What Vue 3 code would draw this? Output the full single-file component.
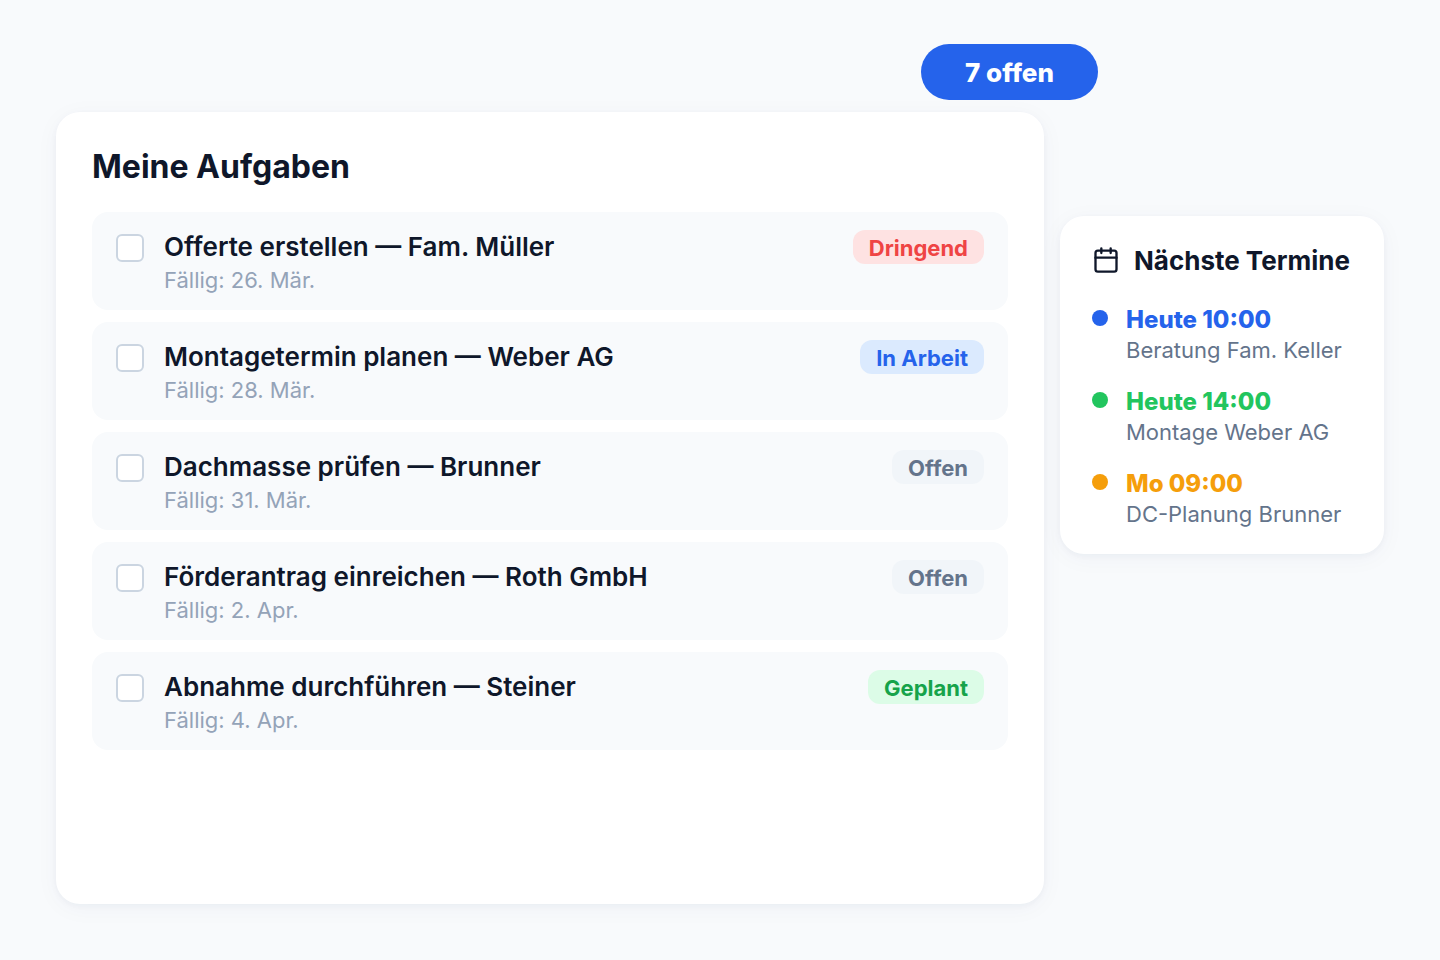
<script setup>
const tasks = [
  { id: 1, title: 'Offerte erstellen — Fam. Müller', due: 'Fällig: 26. Mär.', status: 'Dringend', tone: 'urgent' },
  { id: 2, title: 'Montagetermin planen — Weber AG', due: 'Fällig: 28. Mär.', status: 'In Arbeit', tone: 'progress' },
  { id: 3, title: 'Dachmasse prüfen — Brunner', due: 'Fällig: 31. Mär.', status: 'Offen', tone: 'open' },
  { id: 4, title: 'Förderantrag einreichen — Roth GmbH', due: 'Fällig: 2. Apr.', status: 'Offen', tone: 'open' },
  { id: 5, title: 'Abnahme durchführen — Steiner', due: 'Fällig: 4. Apr.', status: 'Geplant', tone: 'planned' },
]

const events = [
  { id: 1, time: 'Heute 10:00', text: 'Beratung Fam. Keller', tone: 'blue' },
  { id: 2, time: 'Heute 14:00', text: 'Montage Weber AG', tone: 'green' },
  { id: 3, time: 'Mo 09:00', text: 'DC-Planung Brunner', tone: 'amber' },
]
</script>

<template>
  <main class="page">
    <section class="tasks">
      <span class="counter">7 offen</span>
      <h1 class="tasks-title">Meine Aufgaben</h1>
      <ul class="task-list">
        <li v-for="task in tasks" :key="task.id" class="task">
          <input :id="`task-${task.id}`" class="check" type="checkbox" />
          <div class="task-body">
            <label class="task-name" :for="`task-${task.id}`">{{ task.title }}</label>
            <span class="task-due">{{ task.due }}</span>
          </div>
          <span class="badge" :class="task.tone">{{ task.status }}</span>
        </li>
      </ul>
    </section>

    <aside class="events">
      <h2 class="events-title">
        <svg class="calendar" viewBox="0 0 24 24" aria-hidden="true">
          <rect x="3" y="4" width="18" height="18" rx="2" />
          <path d="M16 2v4M8 2v4M3 10h18" />
        </svg>
        Nächste Termine
      </h2>
      <ul class="event-list">
        <li v-for="event in events" :key="event.id" class="event" :class="event.tone">
          <span class="dot"></span>
          <div class="event-body">
            <span class="event-time">{{ event.time }}</span>
            <span class="event-text">{{ event.text }}</span>
          </div>
        </li>
      </ul>
    </aside>
  </main>
</template>

<style>
body {
  background: #f8fafc;
}
</style>

<style scoped>
.page {
  box-sizing: border-box;
  min-height: 100vh;
  display: grid;
  grid-template-columns: minmax(0, 1fr) 324px;
  gap: 16px;
  padding: 112px 56px 56px;
  font-family: Inter, "Liberation Sans", sans-serif;
  color: #0f172a;
}

.tasks,
.events {
  background: #fff;
  border-radius: 24px;
  box-shadow: 0 2px 6px rgba(30, 41, 99, 0.04), 0 4px 24px rgba(30, 41, 99, 0.04);
}

.tasks {
  position: relative;
  padding: 36px;
}

.counter {
  position: absolute;
  top: -68px;
  right: -54px;
  padding: 2px 44px 0;
  border-radius: 28px;
  background: #2563eb;
  color: #fff;
  font-size: 26px;
  font-weight: 800;
  line-height: 54px;
  white-space: nowrap;
}

.tasks-title {
  margin: 0 0 26px;
  font-size: 32px;
  font-weight: 700;
  line-height: 38px;
}

.task-list,
.event-list {
  display: flex;
  flex-direction: column;
  margin: 0;
  padding: 0;
  list-style: none;
}

.task-list {
  gap: 12px;
}

.task {
  display: flex;
  align-items: flex-start;
  gap: 20px;
  padding: 18px 24px 14px;
  border-radius: 16px;
  background: #f8fafc;
}

.check {
  appearance: none;
  flex: none;
  box-sizing: border-box;
  width: 28px;
  height: 28px;
  margin: 4px 0 0;
  border: 2px solid #cbd5e1;
  border-radius: 6px;
  background: #fff;
}

.check:checked {
  border-color: #2563eb;
  background: #2563eb;
}

.task-body,
.event-body {
  display: flex;
  flex-direction: column;
  min-width: 0;
}

.task-body {
  flex: 1;
}

.task-name {
  font-size: 26px;
  font-weight: 600;
  line-height: 34px;
}

.task-due {
  color: #94a3b8;
  font-size: 22px;
  line-height: 32px;
}

.badge {
  flex: none;
  padding: 2px 16px 0;
  border-radius: 12px;
  font-size: 22px;
  font-weight: 700;
  line-height: 32px;
}

.urgent {
  background: #fee2e2;
  color: #ef4444;
}

.progress {
  background: #dbeafe;
  color: #2563eb;
}

.open {
  background: #f1f5f9;
  color: #64748b;
}

.planned {
  background: #dcfce7;
  color: #16a34a;
}

.events {
  align-self: start;
  margin-top: 104px;
  padding: 28px 32px 26px;
}

.events-title {
  display: flex;
  align-items: center;
  gap: 14px;
  margin: 0 0 26px;
  font-size: 26px;
  font-weight: 700;
  line-height: 34px;
  white-space: nowrap;
}

.calendar {
  flex: none;
  width: 28px;
  height: 28px;
  margin-bottom: 2px;
  fill: none;
  stroke: currentColor;
  stroke-width: 2;
  stroke-linecap: round;
  stroke-linejoin: round;
}

.event-list {
  gap: 22px;
}

.event {
  display: flex;
  gap: 18px;
}

.dot {
  flex: none;
  width: 16px;
  height: 16px;
  margin-top: 6px;
  border-radius: 50%;
  background: currentColor;
}

.event-time {
  font-size: 24px;
  font-weight: 800;
  line-height: 32px;
}

.event-text {
  color: #64748b;
  font-size: 22px;
  line-height: 28px;
  white-space: nowrap;
}

.blue {
  color: #2563eb;
}

.green {
  color: #22c55e;
}

.amber {
  color: #f59e0b;
}
</style>
